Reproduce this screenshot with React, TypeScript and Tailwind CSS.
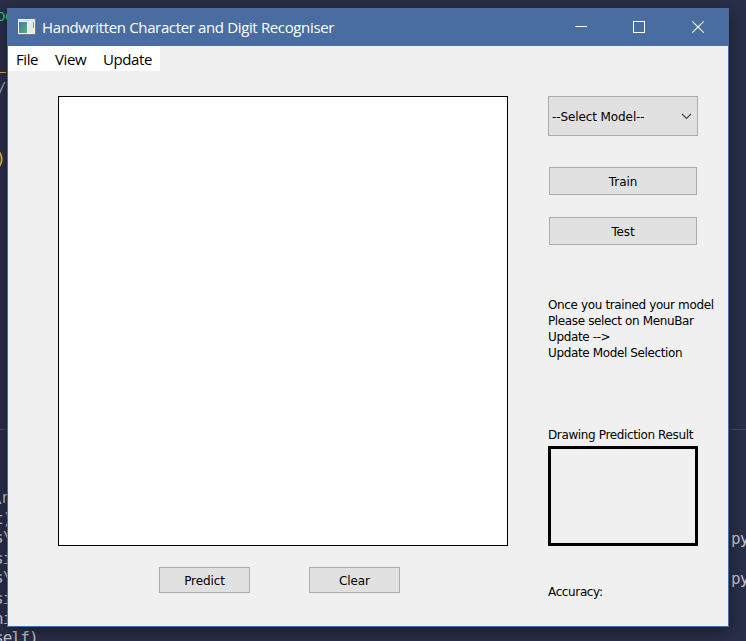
import React from "react";

const codeFont = "font-['DejaVu_Sans_Mono',monospace]";

function PushButton({ label, className }: { label: string; className: string }) {
  return (
    <button
      className={`flex shrink-0 items-center justify-center border border-[#adadad] bg-[#e1e1e1] pt-px tracking-[-0.1px] ${className}`}
    >
      {label}
    </button>
  );
}

function CodeLine({ text, className }: { text: string; className: string }) {
  return (
    <span className={`absolute whitespace-pre text-[16px] leading-[20px] tracking-[-0.9px] ${codeFont} ${className}`}>
      {text}
    </span>
  );
}

function Backdrop() {
  return (
    <div className="absolute inset-0 overflow-hidden bg-[#292f49] text-[#c3c6cc]">
      <CodeLine text="pe" className="left-[-4px] top-[6px] text-[#2fc46f]" />
      <div className="absolute left-0 top-[72px] h-px w-[6px] bg-[#e5a35a]" />
      <CodeLine text="/s" className="left-[-3px] top-[79px] text-[#9aa0b4]" />
      <CodeLine text=")" className="left-[-4px] top-[149px] text-[#f2c528]" />
      <div className="absolute left-0 top-[429px] h-px w-full bg-[#444a5e]" />
      <CodeLine text="\n" className="left-[-7px] top-[488px]" />
      <CodeLine text="t)" className="left-[-6px] top-[509px]" />
      <CodeLine text="s\" className="left-[-6px] top-[528px]" />
      <CodeLine text="si" className="left-[-6px] top-[549px]" />
      <CodeLine text="s\" className="left-[-6px] top-[568px]" />
      <CodeLine text="si" className="left-[-6px] top-[589px]" />
      <CodeLine text="ni" className="left-[-6px] top-[609px]" />
      <CodeLine text="py        p        py" className="left-[63px] top-[609px]" />
      <CodeLine text="self)" className="left-[-6px] top-[628px]" />
      <CodeLine text="py" className="left-[731px] top-[529px]" />
      <CodeLine text="py" className="left-[731px] top-[569px]" />
    </div>
  );
}

function TitleBar() {
  return (
    <div className="flex h-[37px] items-center bg-[#4a6da1] pl-[10px] text-white">
      <svg width="18" height="16" viewBox="0 0 18 16" className="mb-[2px] shrink-0" shapeRendering="crispEdges">
        <rect x="0" y="0" width="18" height="16" fill="#77777b" />
        <rect x="0" y="0" width="17" height="15" fill="#f7f7f4" />
        <rect x="0" y="1" width="17" height="1" fill="#d2d5d8" />
        <defs>
          <linearGradient id="pane" x1="0" y1="0" x2="1" y2="1">
            <stop offset="0" stopColor="#4478a6" />
            <stop offset="1" stopColor="#55b176" />
          </linearGradient>
        </defs>
        <rect x="1" y="3" width="8" height="11" fill="url(#pane)" />
        <rect x="10" y="3" width="5" height="11" fill="#e7e9e8" />
        <rect x="15" y="3" width="1" height="6" fill="#62a188" />
      </svg>
      <span className="mb-[2px] ml-[6px] flex-1 whitespace-nowrap text-[15px] leading-5 tracking-[-0.36px] font-['Open_Sans',sans-serif]">
        Handwritten Character and Digit Recogniser
      </span>
      <svg width="132" height="14" viewBox="0 0 132 14" fill="none" stroke="white" className="mb-[2px] mr-[22px] shrink-0">
        <path d="M1 6.5H13M59.5 1.5H70.5V12.5H59.5Z" shapeRendering="crispEdges" />
        <path d="M118.3 1.3L129.7 12.7M129.7 1.3L118.3 12.7" strokeWidth="1.1" />
      </svg>
    </div>
  );
}

export default function App() {
  return (
    <div className="relative h-[641px] w-[746px] overflow-hidden">
      <Backdrop />
      <div className="absolute left-[7px] top-[8px] flex h-[619px] w-[722px] flex-col border border-[#4a6da1] bg-[#f0f0f0] text-black shadow-[0_4px_14px_2px_rgba(0,0,0,0.35)]">
        <TitleBar />
        <div className="flex h-[25px] w-[152px] shrink-0 items-center bg-white pl-2 pt-[2px] text-[15px] tracking-[-0.4px] font-['Open_Sans',sans-serif]">
          <span className="w-[39px]">File</span>
          <span className="w-[48px]">View</span>
          <span>Update</span>
        </div>
        <div className="flex flex-1 items-start pl-[50px] pt-[25px] text-[12px] leading-4 tracking-[-0.37px] font-['DejaVu_Sans',sans-serif]">
          <div className="flex w-[450px] flex-col">
            <div className="h-[450px] border border-black bg-white" />
            <div className="mt-[21px] flex gap-[59px] pl-[101px]">
              <PushButton label="Predict" className="h-[26px] w-[91px]" />
              <PushButton label="Clear" className="h-[26px] w-[91px]" />
            </div>
          </div>
          <div className="ml-[40px] flex w-[172px] flex-col">
            <button className="flex h-[40px] w-[150px] items-center justify-between border border-[#adadad] bg-[#e1e1e1] pl-[3px] pr-[5px] pt-px">
              <span className="tracking-[-0.1px]">--Select Model--</span>
              <svg width="11" height="7" viewBox="0 0 11 7" fill="none" stroke="#444">
                <path d="M1 1L5.5 5.5L10 1" strokeWidth="1.1" />
              </svg>
            </button>
            <PushButton label="Train" className="ml-px mt-[31px] h-[28px] w-[148px]" />
            <PushButton label="Test" className="ml-px mt-[22px] h-[28px] w-[148px]" />
            <p className="mt-[52px] whitespace-nowrap">
              Once you trained your model
              <br />
              Please select on MenuBar
              <br />
              Update --&gt;
              <br />
              Update Model Selection
            </p>
            <p className="mt-[66px] whitespace-nowrap">Drawing Prediction Result</p>
            <div className="mt-[3px] h-[100px] w-[150px] border-[3px] border-black" />
            <p className="mt-[38px]">Accuracy:</p>
          </div>
        </div>
      </div>
    </div>
  );
}
